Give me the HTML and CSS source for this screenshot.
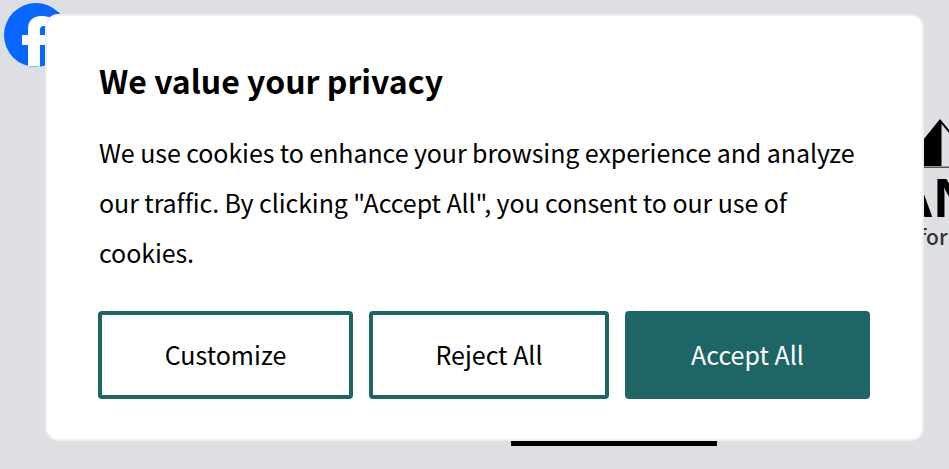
FILE: index.html
```html
<!DOCTYPE html>
<html lang="en">

<head>
    <meta charset="UTF-8">
    <meta name="viewport" content="width=device-width, initial-scale=1.0">
    <title>We value your privacy</title>
    <link rel="stylesheet" href="styles.css">
</head>

<body>

    <!-- Page behind the popup -->
    <svg class="fb-logo" viewBox="0 0 64 64" width="64" height="64" aria-hidden="true">
        <circle cx="32" cy="32" r="32" fill="#0866ff"/>
        <path d="M24 63V42H18V32H24V26C24 18 29 13 37 13C40 13 43 13.500 45 14V23H40C37 23 36 24.500 36 27V32H45L43 42H36V63.700Z" fill="#fff"/>
    </svg>

    <svg class="side-roof" viewBox="0 0 40 50" width="40" height="50" aria-hidden="true">
        <path d="M0 32L25 1L40 19V22L26.500 6V48H0Z" fill="#000"/>
        <rect y="48.500" width="40" height="1.500" fill="#555"/>
    </svg>
    <div class="side-name">AN</div>
    <div class="side-tag">for</div>

    <div class="bottom-bar"></div>

    <!-- Cookie popup -->
    <div class="popup">
        <h2 class="popup-title">We value your privacy</h2>
        <p class="popup-text">We use cookies to enhance your browsing experience and analyze our traffic. By clicking "Accept All", you consent to our use of cookies.</p>
        <div class="popup-buttons">
            <button class="btn btn-customize">Customize</button>
            <button class="btn btn-reject">Reject All</button>
            <button class="btn btn-accept">Accept All</button>
        </div>
    </div>

</body>

</html>
```

FILE: styles.css
```css
body {
    background-color: #dedfe3;
    font-family: "Noto Sans CJK SC", "Noto Sans", sans-serif;
    margin: 0;
    padding: 14px 25px 0 45px;
    height: 469px;
    box-sizing: border-box;
    overflow: hidden;
    color: #000;
}

.fb-logo {
    position: absolute;
    left: 4px;
    top: 3px;
}

.side-roof {
    position: absolute;
    left: 915px;
    top: 118px;
}

.side-name {
    position: absolute;
    left: 894px;
    top: 173px;
    font-family: "Liberation Sans", sans-serif;
    font-size: 55px;
    line-height: 50px;
    font-weight: bold;
}

.side-tag {
    position: absolute;
    left: 919px;
    top: 224px;
    font-size: 21px;
    line-height: 24px;
    font-weight: 500;
    color: #333;
}

.bottom-bar {
    position: absolute;
    left: 511px;
    top: 440px;
    width: 206px;
    height: 6px;
    background-color: #000;
}

.popup {
    position: relative;
    box-sizing: border-box;
    width: 879px;
    height: 427px;
    padding: 44px 51px 0;
    background-color: #ffffff;
    border: 2px solid #efefef;
    border-radius: 13px;
}

.popup-title {
    margin: 0 0 0 1px;
    font-size: 32px;
    line-height: 40px;
    font-weight: 700;
}

.popup-text {
    margin: 27px 0 0 1px;
    font-size: 25px;
    letter-spacing: -0.08px;
    line-height: 50px;
}

.popup-buttons {
    display: flex;
    gap: 16px;
    margin-top: 34px;
}

.btn {
    box-sizing: border-box;
    height: 88px;
    padding: 0 0 2px;
    font-family: inherit;
    font-size: 25px;
    color: #000;
    background-color: #ffffff;
    border: 4px solid #1e6665;
    border-radius: 4px;
    cursor: pointer;
}

.btn-customize {
    width: 255px;
}

.btn-reject {
    width: 240px;
}

.btn-accept {
    width: 245px;
    color: #ffffff;
    background-color: #1e6665;
}
```
